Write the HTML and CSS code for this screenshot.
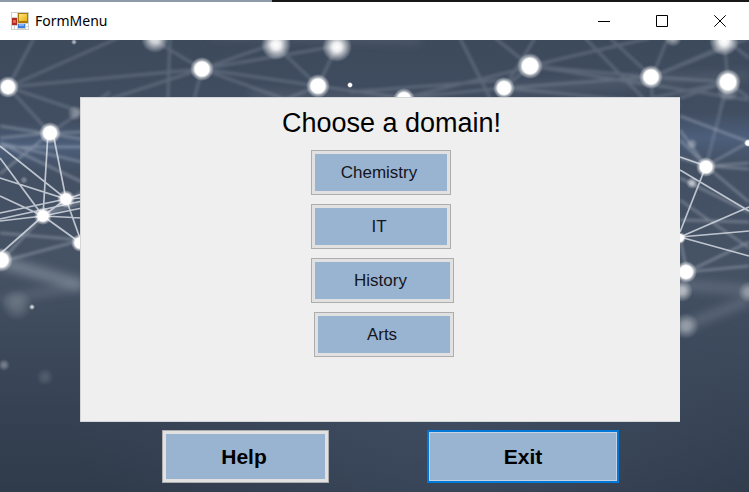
FILE: index.html
```html
<!DOCTYPE html>
<html lang="en">
<head>
<meta charset="utf-8">
<title>FormMenu</title>
<link rel="stylesheet" href="styles.css">
</head>
<body>
<header class="titlebar">
  <svg class="app-icon" viewBox="0 0 18 18" aria-hidden="true">
    <defs>
      <linearGradient id="gold" x1="0" y1="0" x2="1" y2="1"><stop offset="0" stop-color="#ffe680"/><stop offset="1" stop-color="#e8b010"/></linearGradient>
    </defs>
    <rect width="18" height="18" fill="#cfcfcf"/>
    <path d="M1 1h5v4H1zM1 14h2v3H1zM4 14h2v3H4zM15 12h2v2h-2zM15 15h2v2h-2z" fill="#fff"/>
    <rect x="7" y="1" width="10" height="10" fill="#a87808"/>
    <rect x="8" y="2" width="8" height="7" fill="url(#gold)"/>
    <rect x="1" y="6" width="5" height="7" fill="#b02a20"/>
    <rect x="2" y="8" width="3" height="3" fill="#df6a5c"/>
    <rect x="7" y="12" width="7" height="4" fill="#3b7fe0"/>
    <rect x="8" y="12" width="5" height="2" fill="#86b4f6"/>
  </svg>
  <h1 class="caption">FormMenu</h1>
  <div class="window-controls">
    <button class="control" type="button" aria-label="Minimize"><svg viewBox="0 0 12 12"><path d="M0 6.5h12"/></svg></button>
    <button class="control" type="button" aria-label="Maximize"><svg viewBox="0 0 12 12"><path d="M.5.5h11v11H.5z"/></svg></button>
    <button class="control" type="button" aria-label="Close"><svg viewBox="0 0 12 12"><path d="M.3.3l11.4 11.4M11.7.3L.3 11.7"/></svg></button>
  </div>
</header>
<main class="form">
  <svg class="backdrop" viewBox="0 40 749 452" preserveAspectRatio="xMidYMid slice" aria-hidden="true">
    <defs>
      <linearGradient id="sky" x1="0" y1="0" x2="0" y2="1">
        <stop offset="0" stop-color="#3d4a5c"/><stop offset=".25" stop-color="#435064"/><stop offset=".5" stop-color="#465365"/><stop offset=".65" stop-color="#3d4a5c"/><stop offset="1" stop-color="#2f3a4a"/>
      </linearGradient>
      <radialGradient id="lift" cx=".6" cy=".84" r=".5"><stop offset="0" stop-color="#425066" stop-opacity=".7"/><stop offset="1" stop-color="#425066" stop-opacity="0"/></radialGradient>
      <linearGradient id="band" x1="0" y1="0" x2="0" y2="1"><stop offset="0" stop-color="#6482b4" stop-opacity="0"/><stop offset=".5" stop-color="#6482b4" stop-opacity=".3"/><stop offset="1" stop-color="#6482b4" stop-opacity="0"/></linearGradient>
      <radialGradient id="node"><stop offset="0" stop-color="#fff"/><stop offset=".58" stop-color="#fff"/><stop offset=".74" stop-color="#fff" stop-opacity=".5"/><stop offset="1" stop-color="#fff" stop-opacity="0"/></radialGradient>
      <radialGradient id="glow"><stop offset="0" stop-color="#fff"/><stop offset=".3" stop-color="#fff" stop-opacity=".9"/><stop offset="1" stop-color="#fff" stop-opacity="0"/></radialGradient>
      <filter id="soft" x="-10%" y="-10%" width="120%" height="120%"><feGaussianBlur stdDeviation="1.5"/></filter>
      <filter id="fine" x="-10%" y="-10%" width="120%" height="120%"><feGaussianBlur stdDeviation=".5"/></filter>
      <filter id="haze" x="-20%" y="-50%" width="140%" height="200%"><feGaussianBlur stdDeviation="5"/></filter>
    </defs>
    <rect y="40" width="749" height="452" fill="url(#sky)"/>
    <rect y="40" width="749" height="452" fill="url(#lift)"/>
    <rect y="122" width="82" height="48" fill="url(#band)"/>
    <rect x="679" y="112" width="70" height="52" fill="url(#band)"/>
    <g stroke="#b5bdc8" fill="none" filter="url(#haze)">
      <path d="M0 262L82 285" stroke-width="12" opacity=".4"/>
      <path d="M0 300L82 286" stroke-width="7" opacity=".22"/>
      <path d="M680 285L749 290M680 328L749 300" stroke-width="9" opacity=".25"/>
      <path d="M210 34L420 40M250 95L400 100M500 90L749 75" stroke-width="8" opacity=".14"/>
    </g>
    <g stroke="#b9c3cf" stroke-width="3" fill="none" opacity=".23" filter="url(#soft)">
      <path d="M8 87L34 38M8 87L118 38M8 87L202 69L82 108M8 87L82 112M8 87L50 133L110 92M202 69L150 38M202 69L318 86L404 98M202 69L290 38M202 69L194 100M202 69L320 112M170 38L168 98M275 45L318 86L337 46M318 86L260 110M337 46L202 69M404 98L504 88L530 66L652 77L728 82M404 98L550 62M350 92L504 80M460 38L490 98M504 88L535 38M530 66L495 38M530 66L650 38M530 66L749 100M504 88L652 77L749 38M504 88L680 105M585 38L645 100M610 38L652 77L668 38M652 77L652 98L728 82L724 38L749 58M652 77L724 46M728 82L680 98M728 82L720 110M728 82L749 98M728 82L706 166"/>
    </g>
    <g stroke="#d0d8e1" fill="none" opacity=".42" filter="url(#soft)">
      <path d="M0 126L82 139M0 138L50 133L82 132M0 143L82 162M0 143L82 182M0 147L82 147M0 174L50 133M0 233L82 240M0 262L43 216L82 192M0 262L82 240M43 216L82 202" stroke-width="2"/>
      <path d="M680 116L749 142M680 130L706 166L749 142M680 158L706 166L749 163M706 166L749 169M706 166L749 202M706 166L680 140M680 178L749 212M680 200L749 248M680 238L687 272L749 242M687 272L749 266M680 220L749 222" stroke-width="2"/>
    </g>
    <g stroke="#e6ebf1" stroke-width="1.7" fill="none" opacity=".75" filter="url(#fine)">
      <path d="M0 146L66 199L53 133M48 133L43 216L0 158M0 178L66 199L82 194M0 196L43 216L66 199L82 198M0 213L66 199M0 221L43 216L82 208M0 219L82 201M43 216L82 218M43 216L82 244M66 199L82 244M43 216L0 254"/>
      <path d="M706 166L680 232M680 237L749 207M680 237L749 231M680 237L749 256M680 170L749 211M680 157L706 166"/>
    </g>
    <g fill="url(#node)">
      <circle cx="8" cy="87" r="11"/><circle cx="202" cy="69" r="12"/><circle cx="318" cy="86" r="12"/><circle cx="404" cy="99" r="11"/><circle cx="504" cy="88" r="11"/><circle cx="530" cy="66" r="13"/><circle cx="651" cy="77" r="12"/><circle cx="728" cy="82" r="13"/>
      <circle cx="50" cy="133" r="11"/><circle cx="66" cy="199" r="9"/><circle cx="43" cy="216" r="9"/><circle cx="80" cy="243" r="9"/><circle cx="1" cy="260" r="12"/>
      <circle cx="706" cy="167" r="10"/><circle cx="680" cy="238" r="6"/><circle cx="686" cy="272" r="11"/><circle cx="748" cy="143" r="4"/><circle cx="350" cy="85" r="3"/>
    </g>
    <g fill="url(#glow)">
      <circle cx="155" cy="39" r="14" opacity=".8"/><circle cx="276" cy="45" r="15"/><circle cx="337" cy="47" r="15"/><circle cx="724" cy="41" r="15"/><circle cx="673" cy="38" r="9" opacity=".5"/>
      <circle cx="692" cy="183" r="6" opacity=".6"/><circle cx="692" cy="144" r="6" opacity=".3"/><circle cx="682" cy="291" r="11" opacity=".6"/><circle cx="686" cy="326" r="13" opacity=".4"/><circle cx="749" cy="292" r="11" opacity=".4"/><circle cx="728" cy="90" r="12" opacity=".3"/>
      <circle cx="75" cy="113" r="8" opacity=".3"/><circle cx="17" cy="305" r="16" opacity=".18"/><circle cx="32" cy="307" r="3" opacity=".8"/><circle cx="4" cy="365" r="6" opacity=".3"/><circle cx="45" cy="377" r="9" opacity=".12"/><circle cx="74" cy="42" r="3" opacity=".6"/><circle cx="24" cy="180" r="4" opacity=".3"/>
    </g>
  </svg>
  <section class="panel">
    <h2 class="heading">Choose a domain!</h2>
    <div class="domains">
      <button class="btn domain" type="button">Chemistry</button>
      <button class="btn domain" type="button">IT</button>
      <button class="btn domain wide" type="button">History</button>
      <button class="btn domain end" type="button">Arts</button>
    </div>
  </section>
  <div class="actions">
    <button class="btn action" type="button">Help</button>
    <button class="btn action default" type="button">Exit</button>
  </div>
</main>
</body>
</html>
```
FILE: styles.css
```css
* { box-sizing: border-box; }

body {
  display: flex;
  flex-direction: column;
  min-height: 100vh;
  margin: 0;
  color: #000;
  font-family: "Liberation Sans", Arial, sans-serif;
}

body::before {
  content: "";
  height: 2px;
  background: linear-gradient(90deg, #8d9aaa 272px, #171717 272px);
}

.titlebar {
  display: flex;
  align-items: center;
  height: 38px;
  padding-left: 11px;
  background: #fff;
}

.app-icon { width: 18px; height: 18px; }

.caption {
  margin: 0 auto 0 6px;
  font: 400 14px/20px "Noto Sans", "Open Sans", sans-serif;
}

.window-controls { display: flex; height: 100%; }

.control {
  display: grid;
  place-items: center;
  width: 58px;
  padding: 0;
  border: 0;
  background: none;
}

.control svg {
  width: 12px;
  height: 12px;
  fill: none;
  stroke: #000;
  stroke-width: 1;
}

.form {
  position: relative;
  display: flex;
  flex: 1;
  flex-direction: column;
  padding: 57px 69px 9px 80px;
  overflow: hidden;
  background: #3b4859;
}

.backdrop {
  position: absolute;
  inset: 0;
  width: 100%;
  height: 100%;
}

.panel {
  position: relative;
  display: flex;
  flex: 1;
  flex-direction: column;
  align-items: center;
  padding: 11px 0 64px;
  border: 1px solid #d4d6d9;
  border-width: 1px 0 1px 1px;
  background: #efefef;
}

.heading {
  margin: 0;
  padding-left: 22px;
  font-size: 27px;
  font-weight: 400;
  line-height: 28px;
}

.domains {
  display: flex;
  flex-direction: column;
  gap: 9px;
  width: 143px;
  margin: 13px 0 0 3px;
}

.btn {
  padding: 0 3px 0 0;
  border: 1px solid #adadad;
  background: #99b4d1;
  box-shadow: inset 0 0 0 3px #e1e1e1;
  color: #000;
  font-family: inherit;
}

.domain {
  width: 140px;
  height: 45px;
  color: #15151c;
  font-size: 17px;
}

.domain.wide { width: 143px; }
.domain.end { align-self: flex-end; }

.actions {
  position: relative;
  display: flex;
  justify-content: center;
  gap: 98px;
  margin-top: 8px;
  padding-left: 21px;
}

.action {
  width: 167px;
  height: 53px;
  font-size: 21px;
  font-weight: 700;
}

.action.default {
  width: 192px;
  padding: 0;
  border: 2px solid #0078d7;
  box-shadow: inset 0 0 0 1px #c4d4e5;
}
```
